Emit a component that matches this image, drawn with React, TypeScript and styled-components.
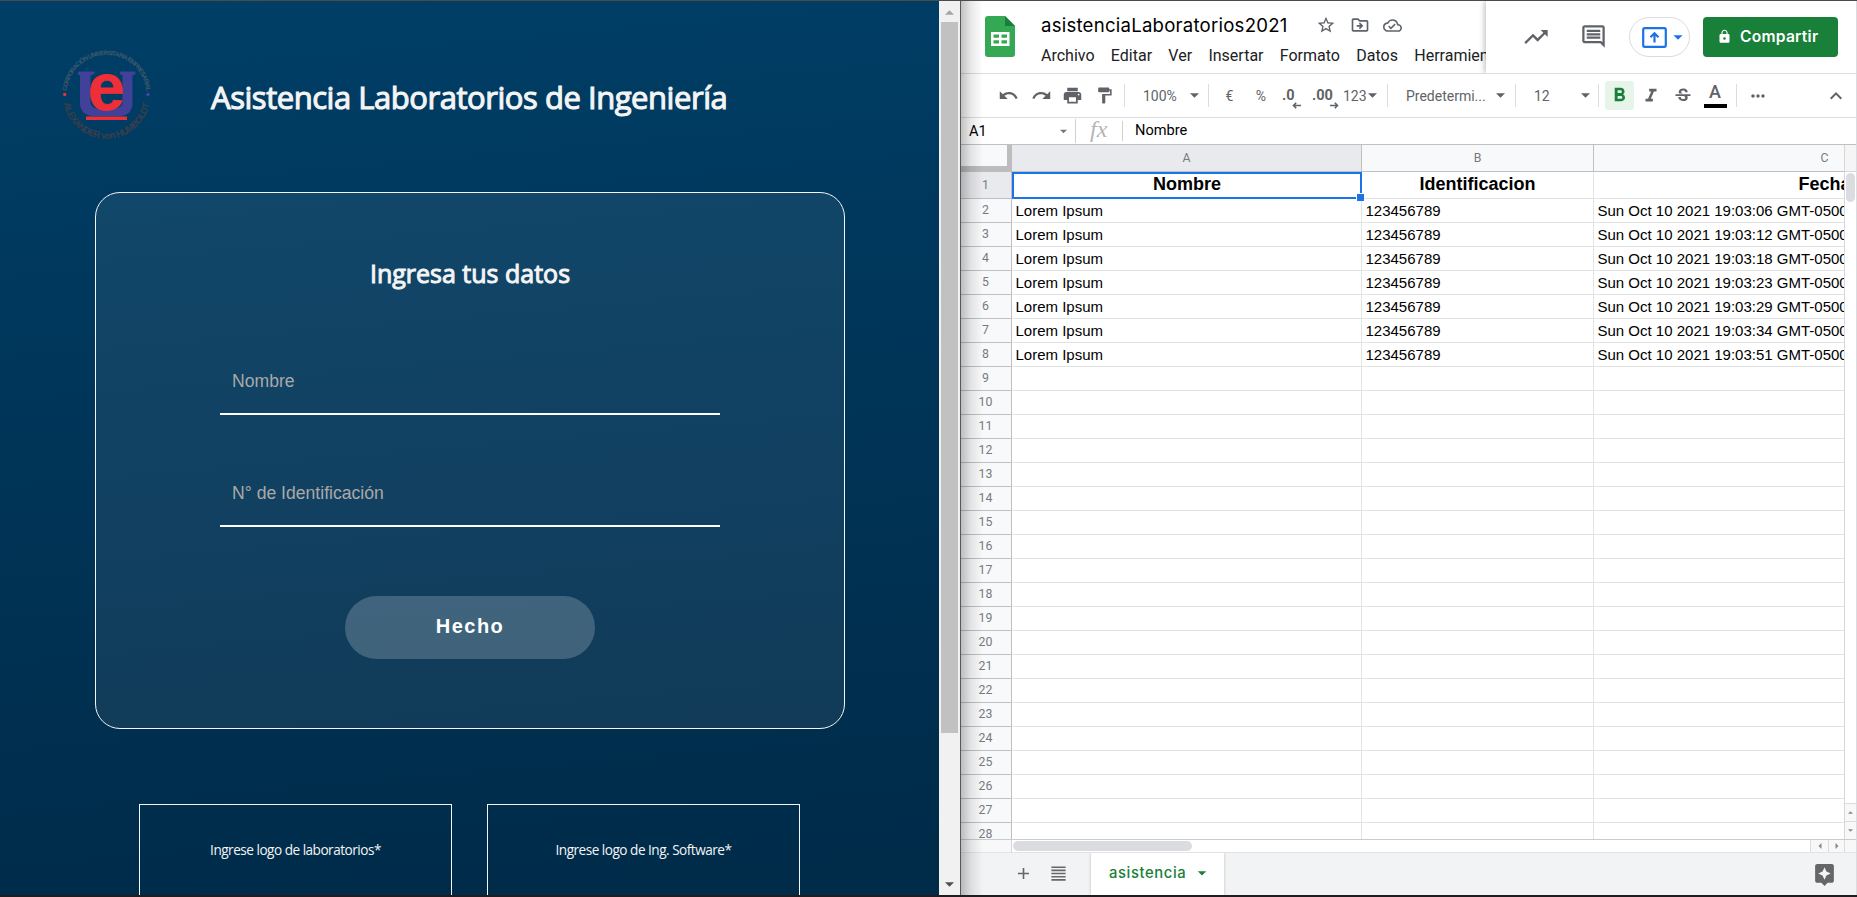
import React from "react";
import styled, { createGlobalStyle, css } from "styled-components";
import {
  MdAdd, MdArrowDropDown, MdAssistant, MdFormatAlignJustify, MdFormatBold, MdFormatItalic,
  MdFormatPaint, MdKeyboardArrowUp, MdLock, MdMoreHoriz, MdOutlineCloudDone,
  MdOutlineComment, MdOutlineDriveFileMove, MdPrint, MdRedo, MdStarBorder,
  MdStrikethroughS, MdTrendingUp, MdUndo,
} from "react-icons/md";

const Global = createGlobalStyle`
  * { box-sizing: border-box; }
  body { margin: 0; overflow: hidden; background: #fff; }
  svg { display: block; flex: none; }
`;

const Desktop = styled.div`
  display: flex;
  width: 1857px;
  height: 897px;
  border-top: 1px solid #4c4a4d;
  border-bottom: 2px solid #201c20;
  overflow: hidden;
`;

/* ---------- attendance page ---------- */

const FormPage = styled.main`
  width: 939px;
  height: 894px;
  overflow: hidden;
  display: flex;
  flex-direction: column;
  align-items: center;
  background: linear-gradient(175deg, #003f67 0%, #00385d 30%, #002f4f 75%, #002b49 100%);
  color: #f4f4f4;
  font-family: "Open Sans", sans-serif;
`;

const Brand = styled.header`
  align-self: stretch;
  height: 191px;
  flex: none;
  display: flex;
  padding: 44px 0 0 56px;
`;

const Title = styled.h1`
  margin: 27px 0 0 54px;
  font-size: 31px;
  line-height: 50px;
  height: 50px;
  font-weight: 400;
  letter-spacing: -0.46px;
  white-space: nowrap;
  -webkit-text-stroke: 1.1px currentColor;
`;

const Card = styled.form`
  width: 750px;
  height: 537px;
  margin-left: 1px;
  flex: none;
  border: 1px solid #f4f4f4;
  border-radius: 25px;
  background: rgba(255, 255, 255, 0.065);
  display: flex;
  flex-direction: column;
  align-items: center;
`;

const CardTitle = styled.h2`
  margin: 60px 0 0;
  font-size: 25px;
  line-height: 40px;
  font-weight: 400;
  -webkit-text-stroke: 1px currentColor;
`;

const Field = styled.input`
  width: 500px;
  height: 66px;
  margin-top: ${(p: { $gap: number }) => p.$gap}px;
  padding: 1px 12px 0;
  border: 0;
  border-bottom: 2px solid #fff;
  background: none;
  color: #fff;
  outline: none;
  font: 17.6px "Liberation Sans", Arial, sans-serif;
  &::placeholder { color: #a9a9a9; opacity: 1; }
`;

const Submit = styled.button`
  width: 250px;
  height: 63px;
  margin-top: 69px;
  padding-bottom: 3px;
  border: 0;
  border-radius: 32px;
  background: rgba(255, 255, 255, 0.2);
  color: #fff;
  font: bold 20px "Liberation Sans", Arial, sans-serif;
  letter-spacing: 1.5px;
`;

const Sponsors = styled.footer`
  display: flex;
  gap: 35px;
  margin: 75px 0 0;
  flex: none;
`;

const Sponsor = styled.div`
  width: 313px;
  height: 160px;
  border: 1px solid #f4f4f4;
  padding-top: 33px;
  text-align: center;
  font-size: 13.6px;
  line-height: 24px;
  letter-spacing: -0.5px;
`;

const PageScroll = styled.div`
  width: 22px;
  flex: none;
  padding: 0 3px 0 2px;
  background: #f1f1f1;
  border-right: 1px solid #58585a;
  display: flex;
  flex-direction: column;
  align-items: center;
`;
const PageThumb = styled.div`
  width: 17px;
  height: 711px;
  flex: none;
  background: #c1c1c1;
`;
const ArrowTop = styled.div`
  height: 21px;
  flex: none;
  padding-top: 7px;
`;
const ArrowBottom = styled.div`
  margin-top: auto;
  padding-bottom: 6px;
`;

/* ---------- spreadsheet ---------- */

const Sheet = styled.section`
  position: relative;
  width: 896px;
  height: 894px;
  display: flex;
  flex-direction: column;
  font-family: Roboto, sans-serif;
  background: #fff;
  border-right: 1px solid #dadce0;
`;

const EdgeShade = styled.div`
  position: absolute;
  inset: 0 auto 0 0;
  width: 22px;
  background: linear-gradient(90deg, rgba(0,0,0,.24), rgba(0,0,0,.09) 45%, rgba(0,0,0,0));
`;

const Top = styled.header`
  height: 73px;
  flex: none;
  display: flex;
  border-bottom: 1px solid #dadce0;
`;
const TopLeft = styled.div`
  width: 525px;
  overflow: hidden;
  display: flex;
  padding: 15px 0 0 24px;
`;
const DocInfo = styled.div`
  margin-left: 26px;
  display: flex;
  flex-direction: column;
`;
const DocRow = styled.div`
  display: flex;
  align-items: center;
  height: 18px;
  color: #5f6368;
`;
const DocName = styled.span`
  width: 275px;
  color: #000;
  white-space: nowrap;
  font: 18.6px/20px Inter, sans-serif;
  letter-spacing: 0.23px;
`;
const DocIcon = styled.span`
  width: 33.5px;
`;
const Menu = styled.nav`
  display: flex;
  gap: 16.3px;
  margin-top: 12px;
  font-size: 16px;
  line-height: 20px;
  color: #202124;
  white-space: nowrap;
`;
const TopRight = styled.div`
  flex: 1;
  display: flex;
  align-items: flex-start;
  padding-top: 16px;
  box-shadow: -2px 0 5px rgba(0,0,0,.22);
  clip-path: inset(0 0 0 -10px);
  color: #5f6368;
`;
const IconBtn = styled.span`
  height: 39px;
  width: 57.5px;
  display: flex;
  align-items: center;
  justify-content: center;
`;
const Present = styled.span`
  width: 61px;
  height: 40px;
  margin-left: 7px;
  padding-left: 12px;
  display: flex;
  align-items: center;
  border: 1px solid #dadce0;
  border-radius: 20px;
  color: #1a73e8;
`;
const Share = styled.button`
  width: 135px;
  height: 40px;
  margin-left: 13px;
  padding: 0 0 1px 14px;
  border: 0;
  border-radius: 4px;
  background: #188038;
  color: #fff;
  display: flex;
  align-items: center;
  gap: 8px;
  font: 600 15.6px/38px Inter, sans-serif;
  letter-spacing: 0.25px;
`;

const Toolbar = styled.div`
  height: 44px;
  flex: none;
  display: flex;
  align-items: center;
  border-bottom: 1px solid #dadce0;
  color: #5f6368;
  font-size: 14px;
`;
const Tool = styled.span<{ $w: number; $gap?: number; $start?: boolean }>`
  width: ${(p) => p.$w}px;
  margin-left: ${(p) => p.$gap || 0}px;
  flex: none;
  display: flex;
  align-items: center;
  justify-content: ${(p) => (p.$start ? "flex-start" : "center")};
  white-space: nowrap;
`;
const Sep = styled.span<{ $gap?: number }>`
  width: 1px;
  height: 23px;
  margin-left: ${(p) => p.$gap || 0}px;
  flex: none;
  background: #dadce0;
`;
const Active = styled.span`
  width: 29px;
  height: 29px;
  margin-left: 6px;
  flex: none;
  border-radius: 3px;
  background: #e6f4ea;
  color: #188038;
  display: flex;
  align-items: center;
  justify-content: center;
`;
const Decimal = styled.span`
  position: relative;
  font-weight: 700;
  font-size: 14.5px;
  svg { position: absolute; right: -6px; bottom: -5px; }
`;
const TextColor = styled.span`
  width: 23px;
  height: 25px;
  border-bottom: 4px solid #000;
  text-align: center;
  font: 500 18px/18px Roboto, sans-serif;
`;

const FormulaBar = styled.div`
  height: 27px;
  flex: none;
  display: flex;
  align-items: center;
  border-bottom: 1px solid #c0c0c0;
  font-size: 14.6px;
  color: #000;
`;
const CellName = styled.span`
  width: 115px;
  height: 24px;
  padding: 0 8px 0 8px;
  display: flex;
  align-items: center;
  justify-content: space-between;
  border-right: 1px solid #d0d0d0;
`;
const Fx = styled.span`
  width: 47px;
  height: 20px;
  padding-left: 14px;
  border-right: 1px solid #d0d0d0;
  color: #b5b5b5;
  font: italic 24px/16px "Liberation Serif", serif;
`;
const Formula = styled.span`
  padding: 0 0 2px 12px;
`;

const GridArea = styled.div`
  height: 695px;
  flex: none;
  display: flex;
  overflow: hidden;
  border-bottom: 1px solid #c9cbce;
`;
const Grid = styled.div`
  width: 883px;
  flex: none;
  display: grid;
  grid-template-columns: 51px 350px 232px 250px;
  grid-template-rows: 27px 27px repeat(27, 24px);
  overflow: hidden;
`;
const Corner = styled.div`
  background: #f8f9fa;
  border-right: 5px solid #bdbdbd;
  border-bottom: 6px solid #bdbdbd;
`;
const headStyle = css`
  display: flex;
  align-items: center;
  justify-content: center;
  border-right: 1px solid #c0c0c0;
  border-bottom: 1px solid #c0c0c0;
  color: #777a7e;
  font-size: 12.3px;
`;
const ColHead = styled.div<{ $on?: boolean; $wide?: boolean }>`
  ${headStyle}
  background: ${(p) => (p.$on ? "#e8eaed" : "#f8f9fa")};
  ${(p) => p.$wide && "width: 462px;"}
`;
const RowHead = styled.div<{ $on?: boolean }>`
  ${headStyle}
  padding-right: 1px;
  padding-bottom: 1px;
  background: ${(p) => (p.$on ? "#e8eaed" : "#f8f9fa")};
`;
const Cell = styled.div<{ $head?: boolean; $wide?: boolean }>`
  border-right: 1px solid #e2e3e3;
  border-bottom: 1px solid #e2e3e3;
  padding: 2px 0 0 3.5px;
  overflow: hidden;
  white-space: nowrap;
  color: #000;
  font: 15px/20px "Liberation Sans", Arial, sans-serif;
  ${(p) => p.$wide && "width: 462px;"}
  ${(p) =>
    p.$head &&
    css`
      font: bold 18px/25px "Liberation Sans", Arial, sans-serif;
      padding: 0;
      text-align: center;
    `}
`;
const Selected = styled(Cell)`
  position: relative;
  overflow: visible;
  border: 0;
  outline: 2px solid #1a73e8;
  outline-offset: -2px;
`;
const Handle = styled.i`
  position: absolute;
  right: -2px;
  bottom: -2px;
  width: 8px;
  height: 8px;
  background: #1a73e8;
  border: 1px solid #fff;
  border-width: 1px 0 0 1px;
  z-index: 1;
`;

const VScroll = styled.div`
  width: 12px;
  border-left: 1px solid #d5d7da;
  display: flex;
  flex-direction: column;
`;
const VTop = styled.div`
  height: 27px;
  background: #f5f5f5;
  border-bottom: 1px solid #d5d7da;
`;
const VThumb = styled.div`
  width: 9px;
  height: 29px;
  margin: 1px 0 0 1px;
  border-radius: 5px;
  background: #dadce0;
`;
const VButton = styled.div<{ $first?: boolean }>`
  height: 18px;
  margin-top: ${(p) => (p.$first ? "auto" : "0")};
  border-top: 1px solid #dadce0;
  background: #f8f8f8;
  display: flex;
  align-items: center;
  justify-content: center;
`;

const HScroll = styled.div`
  height: 13px;
  flex: none;
  display: flex;
  border-bottom: 1px solid #e2e3e5;
`;
const HCorner = styled.div`
  width: 51px;
  background: #f8f8f8;
  border-right: 1px solid #d5d7da;
`;
const HThumb = styled.div`
  width: 179px;
  height: 10px;
  margin: 1px auto 0 1px;
  border-radius: 5px;
  background: #dadce0;
`;
const HButton = styled.div<{ $w: number }>`
  width: ${(p) => p.$w}px;
  border-left: 1px solid #dadce0;
  background: #f8f8f8;
  display: flex;
  align-items: center;
  justify-content: center;
`;

const Tabs = styled.footer`
  flex: 1;
  display: flex;
  align-items: stretch;
  background: #f1f3f4;
  color: #666;
  padding-left: 45px;
`;
const TabTool = styled.span`
  width: 35px;
  padding-bottom: 2px;
  display: flex;
  align-items: center;
  justify-content: center;
`;
const Tab = styled.div`
  width: 133px;
  margin-left: 15px;
  padding: 0 0 2px 18px;
  display: flex;
  align-items: center;
  background: #fff;
  box-shadow: 0 0 3px rgba(0,0,0,.22);
  clip-path: inset(0 -4px 0 -4px);
  color: #188038;
  font: 500 14.8px/38px Inter, sans-serif;
  letter-spacing: 0.6px;
`;
const TabLabel = styled.span`
  width: 83px;
  padding-bottom: 1px;
`;
const Explore = styled.span`
  margin: 9px 19px 0 auto;
`;

type Dir = "up" | "down" | "left" | "right";
const turns: Record<Dir, number> = { down: 0, left: 90, up: 180, right: 270 };
const Triangle = ({ w = 10, dir = "down", color = "#5f6368" }: { w?: number; dir?: Dir; color?: string }) => (
  <svg width={w} height={w} viewBox="0 0 10 10">
    <path d="M0 2.500h10L5 7.500z" fill={color} transform={`rotate(${turns[dir]} 5 5)`} />
  </svg>
);

const UniversityLogo = () => (
  <svg width="101" height="102" viewBox="0 0 101 102">
    <defs>
      <path id="arcTop" d="M10.500 50a40 40 0 0 1 80 0" />
      <path id="arcBottom" d="M7.500 57a43.500 43.500 0 0 0 86 0" />
    </defs>
    <g fontFamily="Liberation Sans, sans-serif" fontWeight="700">
      <text fontSize="6.400" fill="#3f586d">
        <textPath href="#arcTop" startOffset="4" textLength="118">CORPORACIÓN UNIVERSITARIA EMPRESARIAL</textPath>
      </text>
      <text fontSize="9.500" fill="#393f4a">
        <textPath href="#arcBottom" startOffset="1" textLength="121">ALEXANDER von HUMBOLDT</textPath>
      </text>
      <circle cx="8.700" cy="49.500" r="1.700" fill="#ef2f38" />
      <circle cx="92" cy="49.500" r="1.700" fill="#45459d" />
      <path d="M22.500 26.500h16v2.500l-4 1.500v27q0 7 16 7t16-7v-27l-2.500-1.500v-2.500h15.500v2.500l-3 1.500v27q0 13-13 13.500h-26q-13.500-.5-13.500-13.500v-27l-2.500-1.500z" fill="#41419a" />
      <text x="50.500" y="65" fontSize="67" textAnchor="middle" textLength="37" lengthAdjust="spacingAndGlyphs" fill="#ef2f38" stroke="#ef2f38" strokeWidth="0.800">e</text>
      <path d="M30 71.500h41v3.500H30z" fill="#ef2f38" />
    </g>
  </svg>
);

const SheetsLogo = () => (
  <svg width="30" height="41" viewBox="0 0 30 41">
    <path d="M3 0h17l10 10v28a3 3 0 0 1-3 3H3a3 3 0 0 1-3-3V3a3 3 0 0 1 3-3z" fill="#34a853" />
    <path d="M20 0l10 10H20z" fill="#188038" />
    <path fillRule="evenodd" d="M6 16h18.500v14H6zM8.500 18.500v3.200H14v-3.200zM16.500 18.500v3.200H22v-3.200zM8.500 24.200v3.200H14v-3.200zM16.500 24.200v3.200H22v-3.200z" fill="#fff" />
  </svg>
);

const PresentIcon = () => (
  <svg width="25" height="21" viewBox="0 0 25 21" fill="none" stroke="#1a73e8" strokeWidth="2.200">
    <rect x="1.200" y="1.200" width="22.600" height="18.600" rx="1.500" />
    <path d="M12.500 15.500V7M8.500 10.300l4-4 4 4" />
  </svg>
);

const SmallArrow = ({ back }: { back?: boolean }) => (
  <svg width="9" height="7" viewBox="0 0 9 7" fill="none" stroke="#5f6368" strokeWidth="1.600">
    <path d={back ? "M9 3.500H1.500M4.200.8L1.500 3.500l2.700 2.700" : "M0 3.500h7.500M4.800.8l2.700 2.700-2.700 2.700"} />
  </svg>
);

const times = ["19:03:06", "19:03:12", "19:03:18", "19:03:23", "19:03:29", "19:03:34", "19:03:51"];
const menus = ["Archivo", "Editar", "Ver", "Insertar", "Formato", "Datos", "Herramientas"];

const AttendanceForm = () => (
  <>
    <FormPage>
      <Brand>
        <UniversityLogo />
        <Title>Asistencia Laboratorios de Ingeniería</Title>
      </Brand>
      <Card>
        <CardTitle>Ingresa tus datos</CardTitle>
        <Field $gap={56} placeholder="Nombre" />
        <Field $gap={46} placeholder="N° de Identificación" />
        <Submit type="button">Hecho</Submit>
      </Card>
      <Sponsors>
        <Sponsor>Ingrese logo de laboratorios*</Sponsor>
        <Sponsor>Ingrese logo de Ing. Software*</Sponsor>
      </Sponsors>
    </FormPage>
    <PageScroll>
      <ArrowTop><Triangle dir="up" w={9} color="#a3a3a3" /></ArrowTop>
      <PageThumb />
      <ArrowBottom><Triangle w={9} color="#505050" /></ArrowBottom>
    </PageScroll>
  </>
);

const Spreadsheet = () => (
  <Sheet>
    <Top>
      <TopLeft>
        <SheetsLogo />
        <DocInfo>
          <DocRow>
            <DocName>asistenciaLaboratorios2021</DocName>
            <DocIcon><MdStarBorder size={20} /></DocIcon>
            <DocIcon><MdOutlineDriveFileMove size={20} /></DocIcon>
            <DocIcon><MdOutlineCloudDone size={19} /></DocIcon>
          </DocRow>
          <Menu>{menus.map((m) => <span key={m}>{m}</span>)}</Menu>
        </DocInfo>
      </TopLeft>
      <TopRight>
        <Tool $w={21} />
        <IconBtn><MdTrendingUp size={28} /></IconBtn>
        <IconBtn><MdOutlineComment size={27} /></IconBtn>
        <Present><PresentIcon /><MdArrowDropDown size={22} /></Present>
        <Share><MdLock size={15} />Compartir</Share>
      </TopRight>
    </Top>
    <Toolbar>
      <Tool $gap={31} $w={33}><MdUndo size={21} /></Tool>
      <Tool $w={32}><MdRedo size={21} /></Tool>
      <Tool $w={31}><MdPrint size={21} /></Tool>
      <Tool $w={32}><MdFormatPaint size={19} /></Tool>
      <Sep $gap={4} />
      <Tool $gap={18} $w={45} $start>100%</Tool>
      <Tool $w={12}><Triangle w={9} /></Tool>
      <Sep $gap={8} />
      <Tool $gap={5} $w={31}>€</Tool>
      <Tool $w={32}>%</Tool>
      <Tool $gap={5} $w={16} $start><Decimal>.0<SmallArrow back /></Decimal></Tool>
      <Tool $gap={14} $w={20} $start><Decimal>.00<SmallArrow /></Decimal></Tool>
      <Tool $gap={11} $w={24} $start>123</Tool>
      <Tool $w={10}><Triangle w={9} /></Tool>
      <Sep $gap={10} />
      <Tool $gap={18} $w={88} $start>Predetermi...</Tool>
      <Tool $w={12}><Triangle w={9} /></Tool>
      <Sep $gap={9} />
      <Tool $gap={18} $w={45} $start>12</Tool>
      <Tool $w={12}><Triangle w={9} /></Tool>
      <Sep $gap={7} />
      <Active><MdFormatBold size={23} /></Active>
      <Tool $w={33}><MdFormatItalic size={22} /></Tool>
      <Tool $w={31}><MdStrikethroughS size={20} /></Tool>
      <Tool $gap={5} $w={24}><TextColor>A</TextColor></Tool>
      <Sep $gap={9} />
      <Tool $gap={9} $w={24}><MdMoreHoriz size={20} /></Tool>
      <Tool $gap={54} $w={24}><MdKeyboardArrowUp size={24} /></Tool>
    </Toolbar>
    <FormulaBar>
      <CellName>A1<Triangle w={7} color="#777" /></CellName>
      <Fx>fx</Fx>
      <Formula>Nombre</Formula>
    </FormulaBar>
    <GridArea>
      <Grid>
        <Corner />
        <ColHead $on>A</ColHead>
        <ColHead>B</ColHead>
        <ColHead $wide>C</ColHead>
        <RowHead $on>1</RowHead>
        <Selected $head>Nombre<Handle /></Selected>
        <Cell $head>Identificacion</Cell>
        <Cell $head $wide>Fecha</Cell>
        {Array.from({ length: 27 }, (_, i) => (
          <React.Fragment key={i}>
            <RowHead>{i + 2}</RowHead>
            <Cell>{times[i] && "Lorem Ipsum"}</Cell>
            <Cell>{times[i] && "123456789"}</Cell>
            <Cell $wide>{times[i] && `Sun Oct 10 2021 ${times[i]} GMT-0500`}</Cell>
          </React.Fragment>
        ))}
      </Grid>
      <VScroll>
        <VTop />
        <VThumb />
        <VButton $first><Triangle w={5} dir="up" color="#888" /></VButton>
        <VButton><Triangle w={5} color="#888" /></VButton>
      </VScroll>
    </GridArea>
    <HScroll>
      <HCorner />
      <HThumb />
      <HButton $w={18}><Triangle w={6} dir="left" color="#888" /></HButton>
      <HButton $w={16}><Triangle w={6} dir="right" color="#888" /></HButton>
      <HButton $w={12} />
    </HScroll>
    <Tabs>
      <TabTool><MdAdd size={19} /></TabTool>
      <TabTool><MdFormatAlignJustify size={19} /></TabTool>
      <Tab><TabLabel>asistencia</TabLabel><MdArrowDropDown size={20} /></Tab>
      <Explore><MdAssistant size={25} /></Explore>
    </Tabs>
    <EdgeShade />
  </Sheet>
);

export default function App() {
  return (
    <Desktop>
      <Global />
      <AttendanceForm />
      <Spreadsheet />
    </Desktop>
  );
}
